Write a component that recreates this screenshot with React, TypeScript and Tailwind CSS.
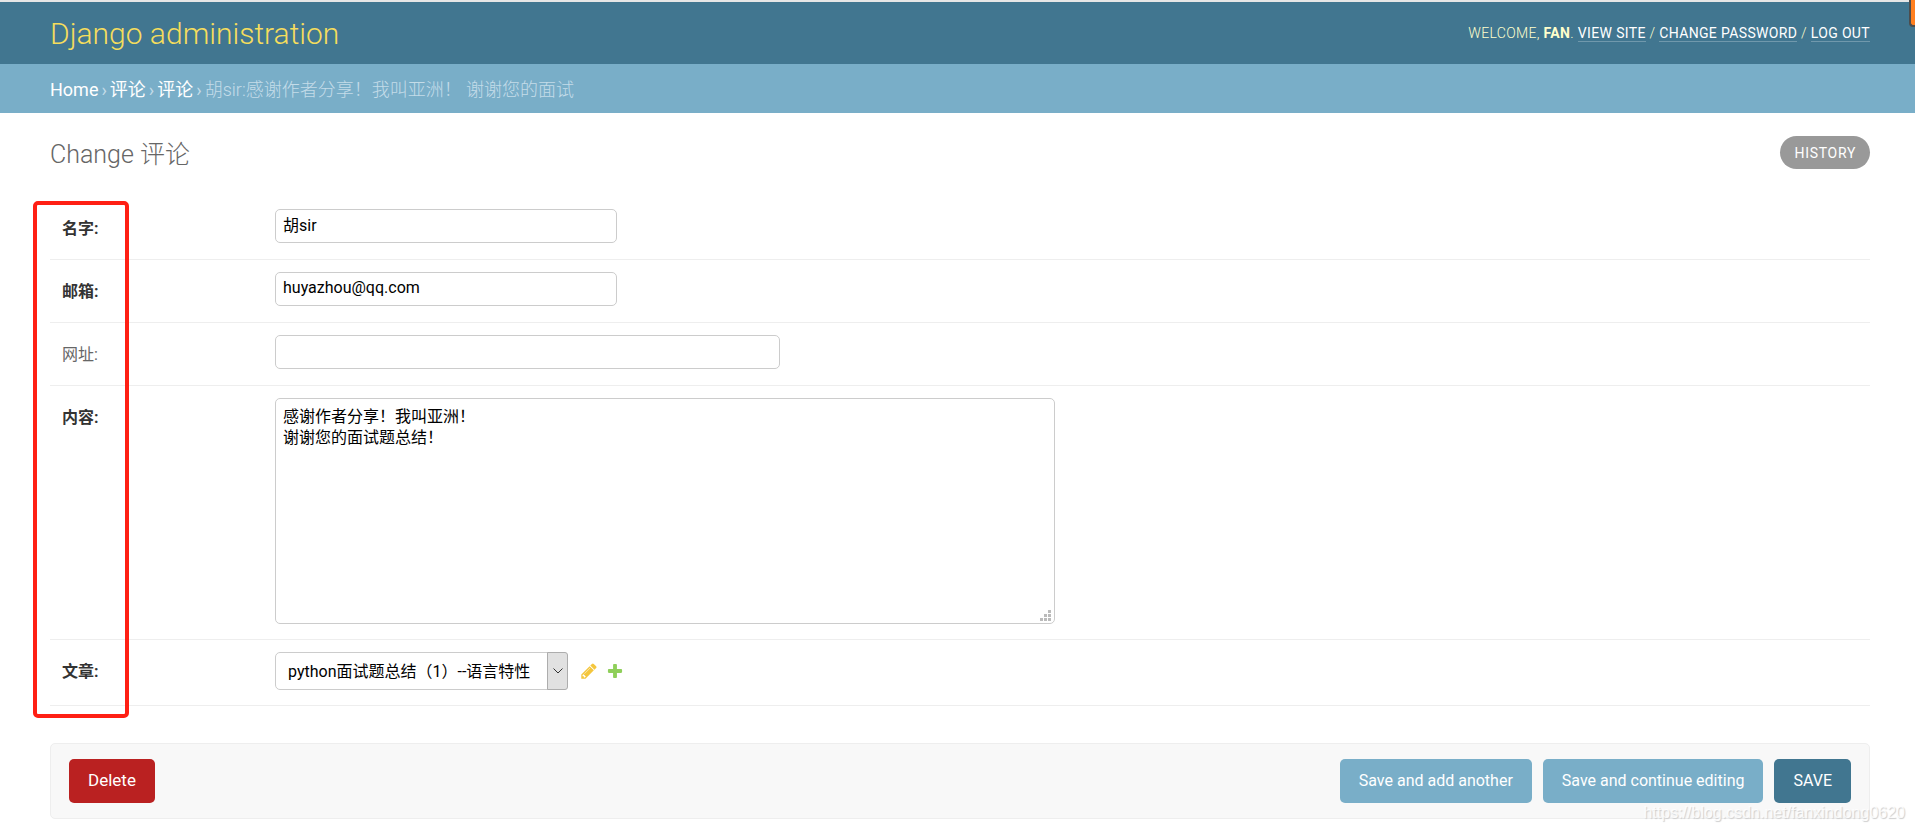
import type { ReactNode } from "react";

const labelBase = "w-[213px] shrink-0 pt-2 text-base leading-6";
const inputBase =
  "h-[34px] max-w-full rounded-[5px] border border-[#ccc] bg-white px-[7px] pb-1 text-base text-black";
const buttonBase = "h-11 cursor-pointer rounded-[5px] px-[19px] text-white";

type FormRowProps = {
  id: string;
  label: string;
  optional?: boolean;
  children: ReactNode;
};

const FormRow = ({ id, label, optional, children }: FormRowProps) => (
  <div className="flex min-h-[63px] border-b border-[#eee] px-3 pt-3 pb-[15px]">
    <label
      htmlFor={id}
      className={
        optional
          ? `${labelBase} font-normal text-[#666]`
          : `${labelBase} font-bold text-[#333]`
      }
    >
      {label}:
    </label>
    {children}
  </div>
);

const userLinks = ["View site", "Change password", "Log out"];

const Header = () => (
  <header className="flex h-16 items-center justify-between border-t-2 border-[#e6e6e6] bg-[#417690] pr-[45px] pl-[50px]">
    <h1 className="pt-0.5 text-[30px] leading-9 font-light text-[#f5dd5d]">
      Django administration
    </h1>
    <div className="text-sm font-light tracking-wide text-[#ffc] uppercase">
      Welcome, <strong className="font-bold">Fan</strong>.{" "}
      {userLinks.map((link, i) => (
        <span key={link}>
          {i > 0 && " / "}
          <a href="#" className="border-b border-white/25 font-normal text-white">
            {link}
          </a>
        </span>
      ))}
    </div>
  </header>
);

const Breadcrumbs = () => (
  <nav className="flex h-[49px] items-center gap-[3px] bg-[#79aec8] px-[50px] pt-0.5 text-lg text-[#c4dce8]">
    <a href="#" className="text-white">
      Home
    </a>
    ›
    <a href="#" className="text-white">
      评论
    </a>
    ›
    <a href="#" className="text-white">
      评论
    </a>
    ›<span className="font-light">胡sir:感谢作者分享！我叫亚洲！ 谢谢您的面试</span>
  </nav>
);

const ArticleField = () => (
  <div className="flex items-center">
    <div className="relative">
      <select
        id="id_article"
        className="h-[38px] w-[293px] appearance-none rounded-[5px] border border-[#ccc] bg-white pt-0.5 pr-6 pl-3 text-base text-black"
      >
        <option>python面试题总结（1）--语言特性</option>
      </select>
      <span className="pointer-events-none absolute inset-y-0 right-0 flex w-[21px] items-center justify-center rounded-r-[3px] border border-[#adadad] bg-[#e1e1e1]">
        <svg className="h-2.5 w-2.5" viewBox="0 0 10 10" fill="none" stroke="#333">
          <path d="M.5 2.500L5 7l4.500-4.500" />
        </svg>
      </span>
    </div>
    <a href="#" aria-label="Change selected 文章" className="ml-3">
      <svg className="h-[18px] w-[18px]" viewBox="0 0 1792 1792" fill="#f4c63d">
        <path d="M491 1536l91-91-235-235-91 91v107h128v128h107zm523-928q0-22-22-22-10 0-17 7l-542 542q-7 7-7 17 0 22 22 22 10 0 17-7l542-542q7-7 7-17zm-54-192l416 416-832 832h-416v-416zm683 96q0 53-37 90l-166 166-416-416 166-165q36-38 90-38 53 0 91 38l235 234q37 39 37 91z" />
      </svg>
    </a>
    <a href="#" aria-label="Add another 文章" className="ml-2">
      <svg className="h-[18px] w-[18px]" viewBox="0 0 1792 1792" fill="#8fcf5a">
        <path d="M1600 796v192q0 40-28 68t-68 28h-416v416q0 40-28 68t-68 28h-192q-40 0-68-28t-28-68v-416h-416q-40 0-68-28t-28-68v-192q0-40 28-68t68-28h416v-416q0-40 28-68t68-28h192q40 0 68 28t28 68v416h416q40 0 68 28t28 68z" />
      </svg>
    </a>
  </div>
);

const App = () => (
  <div className="relative overflow-hidden bg-white pb-3 font-['Roboto','Noto_Sans_CJK_SC',sans-serif]">
    <Header />
    <Breadcrumbs />
    <main className="pt-[23px] pr-[45px] pl-[50px]">
      <div className="flex items-start justify-between">
        <h2 className="pt-[3px] text-[25px] leading-8 font-light text-[#666]">
          Change 评论
        </h2>
        <a
          href="#"
          className="rounded-full bg-[#999] px-3.5 pt-[7px] pb-[5px] text-sm leading-[21px] tracking-wider text-white uppercase"
        >
          History
        </a>
      </div>
      <form className="relative pt-[26px]">
        <FormRow id="id_name" label="名字">
          <input
            id="id_name"
            type="text"
            defaultValue="胡sir"
            className={`${inputBase} w-[342px]`}
          />
        </FormRow>
        <FormRow id="id_email" label="邮箱">
          <input
            id="id_email"
            type="email"
            defaultValue="huyazhou@qq.com"
            className={`${inputBase} w-[342px]`}
          />
        </FormRow>
        <FormRow id="id_url" label="网址" optional>
          <input id="id_url" type="url" className={`${inputBase} w-[505px]`} />
        </FormRow>
        <FormRow id="id_text" label="内容">
          <div className="relative h-[226px] w-[780px]">
            <textarea
              id="id_text"
              defaultValue={"感谢作者分享！我叫亚洲！\n谢谢您的面试题总结！"}
              className="block h-full w-full resize-none rounded-[5px] border border-[#ccc] p-[7px] text-base leading-[21px] text-black"
            />
            {/* resize grip */}
            <svg
              className="pointer-events-none absolute right-1 bottom-[3px] h-[11px] w-[11px]"
              viewBox="0 0 11 11"
              fill="#bbb"
            >
              <path d="M8 0h3v3H8zM4 4h3v3H4zM8 4h3v3H8zM0 8h3v3H0zM4 8h3v3H4zM8 8h3v3H8z" />
            </svg>
          </div>
        </FormRow>
        <FormRow id="id_article" label="文章">
          <ArticleField />
        </FormRow>
        {/* highlight around the labels */}
        <div className="pointer-events-none absolute top-[30px] -bottom-3 -left-[17px] w-24 rounded-[5px] border-4 border-[#ff1f14]" />
      </form>
      <div className="mt-[37px] flex items-center gap-[11px] rounded-[5px] border border-[#eee] bg-[#f8f8f8] px-[18px] py-[15px]">
        <button
          type="button"
          className={`${buttonBase} mr-auto bg-[#ba2121] text-[17px]`}
        >
          Delete
        </button>
        <button type="button" className={`${buttonBase} bg-[#79aec8] text-base`}>
          Save and add another
        </button>
        <button type="button" className={`${buttonBase} bg-[#79aec8] text-base`}>
          Save and continue editing
        </button>
        <button type="button" className={`${buttonBase} bg-[#417690] text-base`}>
          SAVE
        </button>
      </div>
    </main>
    <div className="absolute top-0 right-0 h-[27px] w-[6px] rounded-bl border-b-2 border-l-2 border-[#4d4d4d] bg-[#ff7f1f]" />
    <span className="pointer-events-none absolute right-2.5 bottom-1.5 font-['Liberation_Sans',sans-serif] text-base leading-6 text-white/80 [text-shadow:1px_1px_1px_#ccc]">
      https://blog.csdn.net/fanxindong0620
    </span>
  </div>
);

export default App;
